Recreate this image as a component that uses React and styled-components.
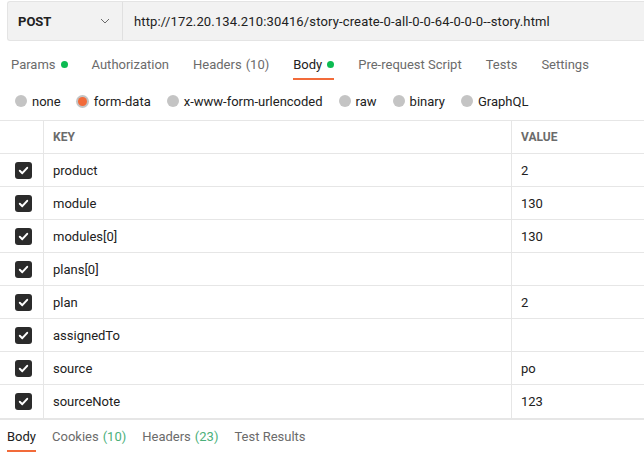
import React from "react";
import styled, { createGlobalStyle } from "styled-components";

const Global = createGlobalStyle`
  html, body { margin: 0; padding: 0; background: #fff; }
  body { font-family: "Roboto", "Inter", sans-serif; color: #212121; overflow: hidden; }
  * { box-sizing: border-box; }
`;

const Page = styled.div`
  width: 644px;
  height: 460px;
  display: flex;
  flex-direction: column;
  overflow: hidden;
`;

const UrlBar = styled.div`
  margin: 1px 0 0 7px;
  height: 40px;
  flex-shrink: 0;
  display: flex;
  background: #f2f2f2;
  border: 1px solid #e4e4e4;
  border-right: none;
  border-radius: 3px 0 0 3px;
`;

const Method = styled.div`
  width: 115px;
  display: flex;
  align-items: center;
  justify-content: space-between;
  padding: 0 12px 0 10px;
  border-right: 1px solid #e0e0e0;
  font-weight: 700;
  font-size: 13px;
  color: #212121;
`;

const Url = styled.div`
  display: flex;
  align-items: center;
  padding-left: 11px;
  font-size: 13px;
  letter-spacing: 0.15px;
  color: #212121;
  white-space: nowrap;
`;

const Tabs = styled.div`
  display: flex;
  align-items: center;
  flex-shrink: 0;
  height: ${(p) => p.h || 38}px;
  margin-top: ${(p) => (p.mt === undefined ? 4 : p.mt)}px;
  padding-left: ${(p) => p.pad || 11}px;
  gap: ${(p) => p.gap || 24}px;
`;

const Tab = styled.div`
  position: relative;
  height: 100%;
  display: flex;
  align-items: center;
  font-size: 13px;
  color: ${(p) => (p.active ? "#212121" : "#6b6b6b")};
  white-space: nowrap;
  &::after {
    content: "";
    display: ${(p) => (p.active ? "block" : "none")};
    position: absolute;
    left: 0;
    right: 0;
    bottom: ${(p) => (p.lineBottom === undefined ? 3 : p.lineBottom)}px;
    height: 2px;
    background: #f26b3a;
  }
`;

const Dot = styled.span`
  width: 7px;
  height: 7px;
  border-radius: 50%;
  background: #0cbb52;
  margin-left: 5px;
`;

const Count = styled.span`
  color: ${(p) => p.color || "#6b6b6b"};
  margin-left: 4px;
`;

const Radios = styled.div`
  display: flex;
  align-items: center;
  flex-shrink: 0;
  height: 36px;
  padding-left: 15px;
  gap: 16px;
`;

const Radio = styled.label`
  display: flex;
  align-items: center;
  gap: 5px;
  font-size: 13px;
  color: #212121;
`;

const Circle = styled.span`
  width: 12px;
  height: 12px;
  border-radius: 50%;
  background: ${(p) => (p.on ? "#f26b3a" : "#c4c4c4")};
  box-shadow: ${(p) => (p.on ? "0 0 0 2px #c4c4c4" : "none")};
  ${(p) => (p.on ? "width:9px;height:9px;margin:0 1.5px;" : "")}
`;

const Table = styled.div`
  display: grid;
  flex-shrink: 0;
  margin-top: 1px;
  grid-template-columns: 44px 468px 1fr;
  border-top: 1px solid #e6e6e6;
  border-bottom: 2px solid #e6e6e6;
`;

const Cell = styled.div`
  height: 33px;
  display: flex;
  align-items: center;
  padding-left: ${(p) => (p.check ? 0 : 9)}px;
  justify-content: ${(p) => (p.check ? "center" : "flex-start")};
  border-right: ${(p) => (p.last ? "none" : "1px solid #e6e6e6")};
  border-bottom: ${(p) => (p.bottom ? "none" : "1px solid #e6e6e6")};
  font-size: 13px;
  color: #212121;
`;

const HeadCell = styled(Cell)`
  font-size: 12px;
  font-weight: 700;
  color: #6b6b6b;
`;

const Box = styled.span`
  width: 17px;
  height: 17px;
  border-radius: 3px;
  background: #2b2b2b;
  display: flex;
  align-items: center;
  justify-content: center;
  margin-left: 3px;
`;

const Check = () => (
  <Box>
    <svg width="11" height="11" viewBox="0 0 11 11">
      <path d="M1.8 5.8 L4.3 8.2 L9.2 2.8" fill="none" stroke="#fff" strokeWidth="2" strokeLinecap="round" strokeLinejoin="round" />
    </svg>
  </Box>
);

const rows = [
  ["product", "2"],
  ["module", "130"],
  ["modules[0]", "130"],
  ["plans[0]", ""],
  ["plan", "2"],
  ["assignedTo", ""],
  ["source", "po"],
  ["sourceNote", "123"],
];

export default function App() {
  return (
    <Page>
      <Global />
      <UrlBar>
        <Method>
          <span>POST</span>
          <svg width="10" height="6" viewBox="0 0 10 6">
            <path d="M1 1 L5 5 L9 1" fill="none" stroke="#6b6b6b" strokeWidth="1" />
          </svg>
        </Method>
        <Url>http://172.20.134.210:30416/story-create-0-all-0-0-64-0-0-0--story.html</Url>
      </UrlBar>
      <Tabs>
        <Tab>Params<Dot /></Tab>
        <Tab>Authorization</Tab>
        <Tab>Headers<Count color="#6b6b6b">(10)</Count></Tab>
        <Tab active>Body<Dot /></Tab>
        <Tab>Pre-request Script</Tab>
        <Tab>Tests</Tab>
        <Tab>Settings</Tab>
      </Tabs>
      <Radios>
        <Radio><Circle />none</Radio>
        <Radio><Circle on />form-data</Radio>
        <Radio><Circle />x-www-form-urlencoded</Radio>
        <Radio><Circle />raw</Radio>
        <Radio><Circle />binary</Radio>
        <Radio><Circle />GraphQL</Radio>
      </Radios>
      <Table>
        <HeadCell />
        <HeadCell>KEY</HeadCell>
        <HeadCell last>VALUE</HeadCell>
        {rows.map(([k, v], i) => (
          <React.Fragment key={k}>
            <Cell check bottom={i === rows.length - 1}><Check /></Cell>
            <Cell bottom={i === rows.length - 1}>{k}</Cell>
            <Cell last bottom={i === rows.length - 1}>{v}</Cell>
          </React.Fragment>
        ))}
      </Table>
      <Tabs pad={7} gap={16} h={34} mt={-1}>
        <Tab active lineBottom={1}>Body</Tab>
        <Tab>Cookies<Count color="#4bb07a">(10)</Count></Tab>
        <Tab>Headers<Count color="#4bb07a">(23)</Count></Tab>
        <Tab>Test Results</Tab>
      </Tabs>
    </Page>
  );
}
